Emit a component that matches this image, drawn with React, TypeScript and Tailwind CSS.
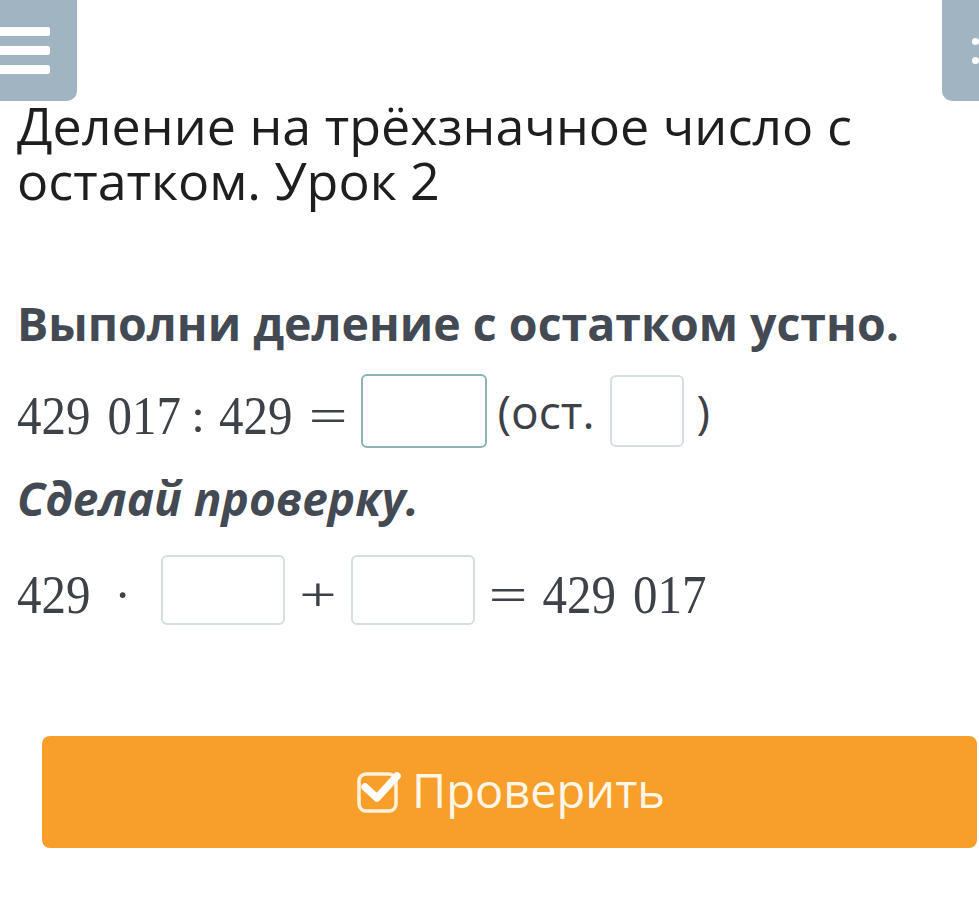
function Box({ w, h, active }: { w: string; h: string; active?: boolean }) {
  return (
    <div
      className={`${w} ${h} shrink-0 rounded-[6px] bg-white border-2 ${
        active ? "border-[#8fb2b6]" : "border-[#d3dfe1]"
      }`}
    />
  )
}

function CheckSquare() {
  return (
    <svg width="46" height="46" viewBox="0 0 46 46" fill="none">
      <rect x="3" y="5" width="37" height="37" rx="7" stroke="#fff2dc" strokeWidth="3.5" />
      <path d="M9 18 L21 29 L41 7" stroke="#ffffff" strokeWidth="7.5" strokeLinecap="round" strokeLinejoin="round" />
    </svg>
  )
}

// KaTeX-style digits are a bit taller than Liberation Serif's
function Num({ children, className = "" }: { children: string; className?: string }) {
  return <span className={`inline-block scale-y-[1.12] ${className}`}>{children}</span>
}

export default function App() {
  const sans = { fontFamily: '"Open Sans", sans-serif' }
  const math = { fontFamily: '"Liberation Serif", serif' }
  return (
    <div className="w-[979px] h-[902px] bg-white overflow-hidden" style={sans}>
      <div className="flex justify-between h-[101px]">
        <div className="w-[97px] -ml-[20px] rounded-br-[10px] bg-[#a0b5c1] flex flex-col justify-center gap-[10px]">
          <div className="h-[9px] w-[70px] bg-white rounded-[2px]" />
          <div className="h-[9px] w-[70px] bg-white rounded-[2px]" />
          <div className="h-[9px] w-[70px] bg-white rounded-[2px]" />
        </div>
        <div className="w-[60px] -mr-[23px] rounded-bl-[10px] bg-[#a0b5c1] flex flex-col justify-center gap-[12px] pl-[30px]">
          <div className="w-[7px] h-[7px] rounded-full bg-white" />
          <div className="w-[7px] h-[7px] rounded-full bg-white" />
        </div>
      </div>

      <div className="pl-[17px] pr-[10px]">
        <h1 className="-mt-[4px] text-[52px] leading-[55px] text-[#1e1e1e] font-normal">
          Деление на трёхзначное число с остатком. Урок 2
        </h1>

        <h2 className="mt-[91px] text-[46.5px] leading-[50px] font-bold text-[#434a53]">
          Выполни деление с остатком устно.
        </h2>

        <div className="mt-[26px] flex items-center h-[74px] text-[#3d4148]">
          <div className="flex items-center text-[49px] leading-none translate-y-[4px]" style={math}>
            <Num>429</Num>
            <Num className="ml-[17px]">017</Num>
            <span className="ml-[10px] w-[14px] text-center">:</span>
            <Num className="ml-[14px]">429</Num>
            <span className="ml-[17px] w-[36px] text-center inline-block scale-x-[1.4]">=</span>
          </div>
          <div className="ml-[15px]">
            <Box w="w-[126px]" h="h-[74px]" active />
          </div>
          <span className="ml-[11px] text-[46px] leading-none">(ост.</span>
          <div className="ml-[15px]">
            <Box w="w-[74px]" h="h-[72px]" />
          </div>
          <span className="ml-[13px] text-[46px] leading-none">)</span>
        </div>

        <h3 className="mt-[25px] text-[46px] leading-[50px] font-bold italic text-[#434a53]">
          Сделай проверку.
        </h3>

        <div className="mt-[32px] flex items-center h-[70px] text-[#3d4148] text-[49px] leading-none" style={math}>
          <Num className="translate-y-[4px]">429</Num>
          <span className="ml-[24px] w-[12px] text-center translate-y-[4px]">·</span>
          <div className="ml-[34px]">
            <Box w="w-[124px]" h="h-[70px]" />
          </div>
          <span className="ml-[16px] w-[34px] text-center inline-block scale-x-[1.35] translate-y-[4px]">+</span>
          <div className="ml-[16px]">
            <Box w="w-[124px]" h="h-[70px]" />
          </div>
          <span className="ml-[16px] w-[34px] text-center inline-block scale-x-[1.4] translate-y-[4px]">=</span>
          <Num className="ml-[18px] translate-y-[4px]">429</Num>
          <Num className="ml-[17px] translate-y-[4px]">017</Num>
        </div>
      </div>

      <div className="mt-[111px] ml-[42px] w-[935px] h-[112px] rounded-[8px] bg-[#f89e2b] flex items-center justify-center text-white">
        <div className="flex items-center gap-[10px] ml-[2px]">
          <CheckSquare />
          <span className="text-[47px] leading-none text-[#fff6e6] -translate-y-[2px]">Проверить</span>
        </div>
      </div>
    </div>
  )
}
